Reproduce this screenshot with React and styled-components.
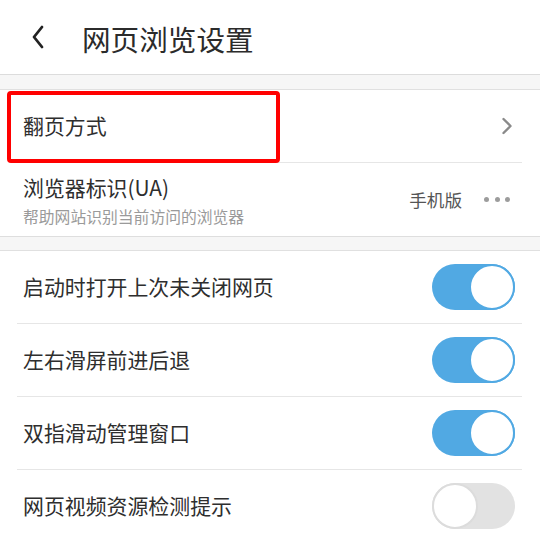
import React from 'react';
import styled, { createGlobalStyle } from 'styled-components';

const GlobalStyle = createGlobalStyle`
  html, body {
    margin: 0;
    padding: 0;
    background: #ffffff;
    font-family: "Noto Sans CJK SC", "Noto Sans", sans-serif;
  }
`
const Page = styled.div`
  width: 540px;
  height: 540px;
  overflow: hidden;
  background: #ffffff;
`
const Header = styled.header`
  height: 74px;
  display: flex;
  align-items: center;
  padding-left: 31px;
  border-bottom: 1px solid #dcdcdc;
  box-sizing: content-box;
`
const BackButton = styled.button`
  border: none;
  background: none;
  padding: 0;
  width: 16px;
  height: 26px;
  display: flex;
  align-items: center;
  cursor: pointer;
`
const Title = styled.h1`
  margin: 2px 0 0 35px;
  font-size: 28.6px;
  font-weight: 400;
  color: #2b2b2b;
  letter-spacing: 0;
`
const Gap = styled.div`
  height: ${p => p.h}px;
  background: #f6f6f6;
  border-bottom: 1px solid #e0e0e0;
`
const Section = styled.section`
  background: #ffffff;
  border-bottom: ${p => (p.bordered ? '1px solid #dedede' : 'none')};
`
const Row = styled.div`
  position: relative;
  height: ${p => p.h || 72}px;
  display: flex;
  align-items: center;
  justify-content: space-between;
  padding: 0 25px 0 23px;
`
const Texts = styled.div`
  display: flex;
  flex-direction: column;
  padding-top: 2px;
`
const Label = styled.span`
  font-size: 20.9px;
  color: #2e2e2e;
  line-height: 1.3;
`
const Hint = styled.span`
  font-size: 15.8px;
  color: #9a9a9a;
  margin-top: 6px;
  line-height: 1.3;
`
const Divider = styled.div`
  height: 1px;
  margin: 0 18px 0 17px;
  background: #e6e6e6;
`
const Right = styled.div`
  display: flex;
  align-items: center;
  gap: 22px;
`
const Value = styled.span`
  font-size: 17.6px;
  color: #555555;
`
const Dots = styled.div`
  display: flex;
  gap: 5.5px;
  margin-right: 5px;
`
const Dot = styled.span`
  width: 5px;
  height: 5px;
  border-radius: 50%;
  background: #9c9c9c;
`
const Highlight = styled.div`
  position: absolute;
  left: 7px;
  top: 1px;
  width: 273px;
  height: 72px;
  box-sizing: border-box;
  border: 4.5px solid #ff0000;
  border-radius: 4px;
  pointer-events: none;
`
const Track = styled.div`
  width: 83px;
  height: 46px;
  border-radius: 23px;
  box-sizing: border-box;
  background: ${p => (p.on ? '#51a9e3' : '#e2e2e2')};
  display: flex;
  justify-content: ${p => (p.on ? 'flex-end' : 'flex-start')};
`
const Knob = styled.div`
  width: 46px;
  height: 46px;
  border-radius: 50%;
  box-sizing: border-box;
  background: #ffffff;
  border: 2px solid ${p => (p.on ? '#51a9e3' : '#dcdcdc')};
`

const Toggle = ({ on }) => (
  <Track on={on ? 1 : 0}>
    <Knob on={on ? 1 : 0} />
  </Track>
)

const toggles = [
  { label: '启动时打开上次未关闭网页', on: true },
  { label: '左右滑屏前进后退', on: true },
  { label: '双指滑动管理窗口', on: true },
  { label: '网页视频资源检测提示', on: false },
]

const App = () => {
  return (
    <Page>
      <GlobalStyle />
      <Header>
        <BackButton>
          <svg width="14" height="24" viewBox="0 0 14 24">
            <path d="M11 2 L3 12 L11 22" fill="none" stroke="#222" strokeWidth="2.8" strokeLinecap="round" strokeLinejoin="round" />
          </svg>
        </BackButton>
        <Title>网页浏览设置</Title>
      </Header>
      <Gap h={14} />
      <Section bordered>
        <Row>
          <Label>翻页方式</Label>
          <svg width="12" height="18" viewBox="0 0 12 18" style={{ marginRight: 2 }}>
            <path d="M2.5 2 L9.5 9 L2.5 16" fill="none" stroke="#8a8a8a" strokeWidth="2.4" strokeLinecap="round" strokeLinejoin="round" />
          </svg>
          <Highlight />
        </Row>
        <Divider />
        <Row h={73}>
          <Texts>
            <Label>浏览器标识(UA)</Label>
            <Hint>帮助网站识别当前访问的浏览器</Hint>
          </Texts>
          <Right>
            <Value>手机版</Value>
            <Dots>
              <Dot />
              <Dot />
              <Dot />
            </Dots>
          </Right>
        </Row>
      </Section>
      <Gap h={13} />
      <Section>
        {toggles.map((t, i) => (
          <React.Fragment key={t.label}>
            {i > 0 && <Divider />}
            <Row>
              <Label>{t.label}</Label>
              <Toggle on={t.on} />
            </Row>
          </React.Fragment>
        ))}
      </Section>
    </Page>
  )
}

export default App;
